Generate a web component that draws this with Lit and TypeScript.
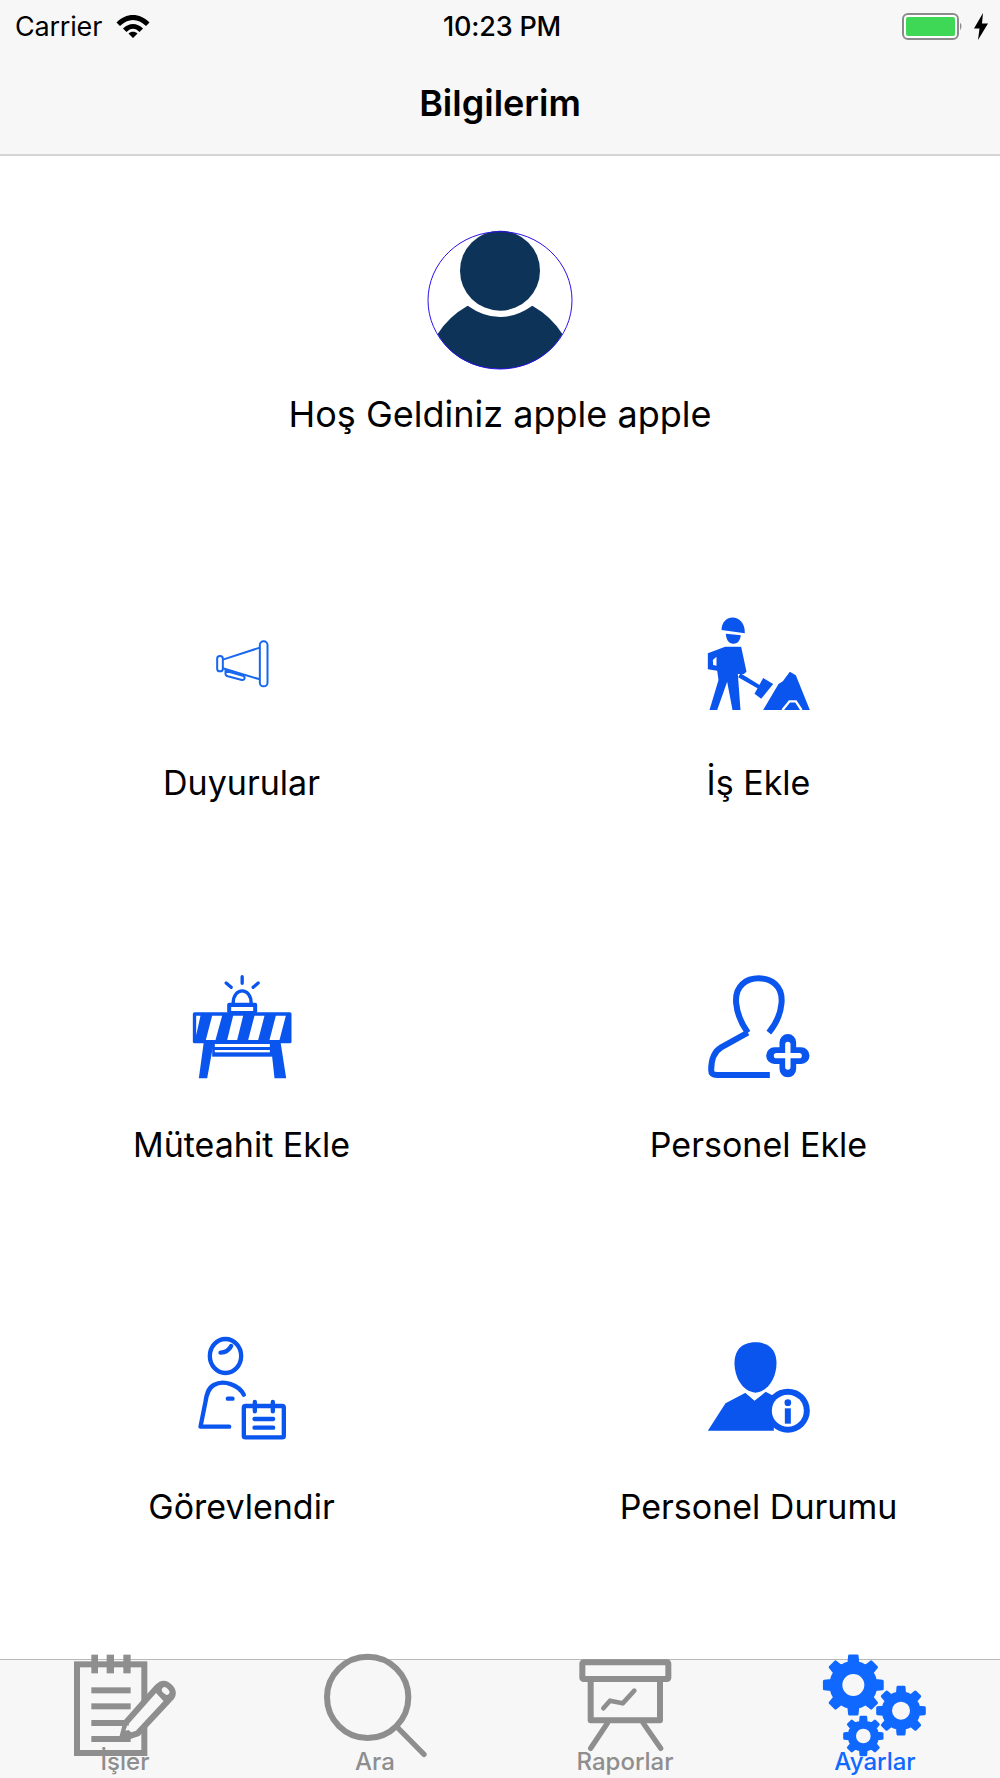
import { LitElement, html, css, svg } from "lit";
import { customElement } from "lit/decorators.js";

function gear(cx: number, cy: number, R: number, r: number, hole: number, teeth = 8) {
  const pts: string[] = [];
  const step = (Math.PI * 2) / teeth;
  for (let i = 0; i < teeth; i++) {
    const a = i * step - Math.PI / 2;
    const offs: [number, number][] = [
      [-0.5, r], [-0.26, r], [-0.17, R], [0.17, R], [0.26, r],
    ];
    for (const [o, rad] of offs) {
      const t = a + o * step;
      pts.push(`${(cx + rad * Math.cos(t)).toFixed(1)} ${(cy + rad * Math.sin(t)).toFixed(1)}`);
    }
  }
  return `M${pts.join("L")}Z M${cx - hole} ${cy}a${hole} ${hole} 0 1 0 ${hole * 2} 0a${hole} ${hole} 0 1 0 ${-hole * 2} 0Z`;
}

const megaphone = svg`<g fill="none" stroke="#1767f0" stroke-width="6" stroke-linejoin="round">
  <rect x="80" y="168" width="17" height="46" rx="8"/>
  <rect x="208" y="124" width="23" height="135" rx="11"/>
  <path d="M97 179L208 143M97 205L208 238"/>
  <path d="M105 212l52 15q7 3 5 9q-2 5-8 4l-42-11q-7-2-7-8z" />
</g>`;

const worker = svg`<g fill="#0a55ee">
  <path d="M93 90C93 38 165 38 163 100Z"/>
  <path d="M106 101L151 106C148 128 136 133 126 131C114 129 107 118 106 101Z"/>
  <path fill-rule="evenodd" d="M104 140H152L168 215L160 222L142 222L150 330H126L110 245L80 330H57L84 240L80 212L52 208V160ZM78 170L67 180L68 195L78 197Z"/>
  <path d="M150 220L212 258L206 268L143 232Z"/>
  <path d="M218 234L248 252L212 296L192 281Z"/>
  <path d="M218 330L264 252L277 244L298 215L316 226L358 330Z"/>
</g>
<path d="M276 330L297 304H316L333 330" fill="none" stroke="#fff" stroke-width="7"/>`;

const barrier = svg`<g fill="#0a55ee">
  <rect x="37" y="157" width="296" height="93" rx="5"/>
  <rect x="140" y="128" width="90" height="32" rx="6"/>
  <path d="M70 245H100L80 355H55ZM270 245H300L317 355H282Z"/>
  <rect x="95" y="248" width="180" height="42"/>
</g>
<g fill="#fff">
  <path d="M47 167H60L47 226ZM95 167H125L105 240H76ZM158 167H188L170 240H140ZM222 167H252L233 240H203ZM286 167H316L297 240H267Z"/>
  <rect x="103" y="252" width="165" height="9"/>
  <rect x="103" y="270" width="165" height="7"/>
  <rect x="152" y="141" width="66" height="12"/>
</g>
<g fill="none" stroke="#0a55ee" stroke-width="10" stroke-linecap="round">
  <path d="M158 130C158 80 212 80 212 130"/>
  <path d="M185 50V70M137 69L152 82M233 69L218 82"/>
</g>`;

const personAdd = svg`<g fill="none" stroke="#0a55ee" stroke-width="18">
  <path d="M172 218C152 190 140 165 137 130C132 75 170 55 205 55C240 55 278 75 273 130C270 165 258 190 235 218"/>
  <path d="M172 218L92 262C70 275 62 300 62 330C62 342 68 345 80 345H238" />
</g>
<path d="M252 280H332M292 240V320" transform="translate(0 7)" fill="none" stroke="#0a55ee" stroke-width="50" stroke-linecap="round"/>
<path d="M258 287H326M292 253V321" fill="none" stroke="#fff" stroke-width="16" stroke-linecap="round"/>`;

const assign = svg`<g fill="none" stroke="#0a55ee" stroke-width="13" stroke-linecap="round" stroke-linejoin="round">
  <ellipse cx="135" cy="108" rx="47" ry="51"/>
  <path d="M120 98C135 97 146 90 152 78"/>
  <path d="M190 224C175 195 130 178 100 195C82 205 78 225 75 245L60 320H146"/>
  <path d="M142 236H156"/>
  <rect x="190" y="258" width="120" height="94" rx="5"/>
  <path d="M223 246V274M277 246V274M222 297H278M222 323H278"/>
</g>`;

const personInfo = svg`<g fill="#0a55ee">
  <path d="M195 67C240 67 258 95 258 130C258 170 235 215 195 218C155 215 132 170 132 130C132 95 150 67 195 67Z"/>
  <path d="M52 332L105 250L165 218L192 240L225 215L250 228V332Z"/>
  <circle cx="292" cy="272" r="66"/>
</g>
<path d="M165 216L192 240L224 214" fill="none" stroke="#fff" stroke-width="4"/>
<circle cx="292" cy="272" r="48" fill="#fff"/>
<circle cx="292" cy="248" r="10" fill="#0a55ee"/>
<rect x="283" y="265" width="18" height="46" fill="#0a55ee"/>`;

const items = [
  { label: "Duyurular", icon: megaphone, vb: "-40.5 0 390 360" },
  { label: "İş Ekle", icon: worker, vb: "10.5 0 390 360" },
  { label: "Müteahit Ekle", icon: barrier, vb: "-10.5 6 390 360" },
  { label: "Personel Ekle", icon: personAdd, vb: "10.5 6 390 360" },
  { label: "Görevlendir", icon: assign, vb: "-10.5 12 390 360" },
  { label: "Personel Durumu", icon: personInfo, vb: "10.5 12 390 360" },
];

const G = "#8e8e8e";
const tabNotes = svg`<g fill="${G}">
  <rect x="124" y="44" width="20" height="56"/><rect x="170" y="44" width="22" height="56"/><rect x="220" y="44" width="22" height="56"/>
  <rect x="124" y="142" width="118" height="18"/><rect x="124" y="190" width="118" height="18"/>
  <rect x="124" y="240" width="100" height="18"/><rect x="124" y="288" width="118" height="18"/>
</g>
<rect x="81" y="73" width="202" height="266" fill="none" stroke="${G}" stroke-width="18"/>
<path d="M216 296L229 246L322 141Q341 122 360 141Q378 160 358 178L263 280Z" fill="#f7f7f7" stroke="${G}" stroke-width="18" stroke-linejoin="round"/>
<path d="M320 143Q341 122 360 141Q378 160 358 178L346 189L312 152Z" fill="${G}"/>
<ellipse cx="347" cy="153" rx="9" ry="13" transform="rotate(-45 347 153)" fill="#f7f7f7"/>
<path d="M205 305L222 258L252 284Z" fill="${G}"/><path d="M226 272L232 256L246 268Z" fill="#f7f7f7"/>`;

const tabSearch = svg`<g transform="translate(0 0)" fill="none" stroke="${G}">
  <circle cx="203" cy="172" r="122" stroke-width="18"/>
  <path d="M295 265L372 343" stroke-width="16" stroke-linecap="round"/>
</g>`;

const tabBoard = svg`<g fill="none" stroke="${G}" stroke-linecap="round" stroke-linejoin="round">
  <rect x="97" y="67" width="258" height="50" rx="4" stroke-width="18"/>
  <path d="M122 122V241H330V122" stroke-width="18"/>
  <path d="M160 205L180 182L218 190L253 152" stroke-width="14"/>
  <path d="M172 250L122 325M280 250L332 325" stroke-width="16"/>
</g>`;

const B = "#0f68ff";
const tabGears = svg`<g fill="${B}" stroke="${B}" stroke-width="8" stroke-linejoin="round" fill-rule="evenodd">
  <path d="${gear(160, 135, 88, 68, 37)}"/>
  <path d="${gear(303, 212, 71, 54, 31)}"/>
  <path d="${gear(190, 288, 57, 43, 26)}"/>
</g>`;

const tabs = [
  { label: "İşler", icon: tabNotes, active: false },
  { label: "Ara", icon: tabSearch, active: false },
  { label: "Raporlar", icon: tabBoard, active: false },
  { label: "Ayarlar", icon: tabGears, active: true },
];

@customElement("app-root")
export class AppRoot extends LitElement {
  static styles = css`
    :host {
      display: flex;
      flex-direction: column;
      width: 1000px;
      height: 1778px;
      background: #fff;
      font-family: Inter, "Liberation Sans", sans-serif;
      color: #000;
      overflow: hidden;
    }
    header {
      background: #f7f7f7;
      border-bottom: 2px solid #d5d5d5;
      height: 156px;
      box-sizing: border-box;
      flex: none;
    }
    .status {
      height: 52px;
      display: grid;
      grid-template-columns: 1fr auto 1fr;
      align-items: center;
      padding: 0 11px 0 15px;
      font-size: 27px;
      letter-spacing: -0.2px;
    }
    .left { display: flex; align-items: center; gap: 14px; }
    .time { font-weight: 500; }
    .right { display: flex; align-items: center; justify-content: flex-end; gap: 10px; }
    .nav {
      height: 102px;
      display: flex;
      align-items: center;
      justify-content: center;
      font-size: 36px;
      font-weight: 600;
    }
    main {
      flex: 1;
      display: flex;
      flex-direction: column;
      min-height: 0;
    }
    .profile {
      padding-top: 54px;
      display: flex;
      flex-direction: column;
      align-items: center;
      height: 444px;
      box-sizing: border-box;
      flex: none;
    }
    .profile svg { display: block; }
    .welcome {
      font-size: 36px;
      line-height: 44px;
      margin-top: 2px;
    }
    .grid {
      display: grid;
      grid-template-columns: repeat(2, 483px);
      column-gap: 34px;
      grid-auto-rows: 362px;
    }
    .cell {
      display: flex;
      flex-direction: column;
      align-items: center;
    }
    .cell svg { display: block; }
    .cell span {
      margin-top: 41px;
      font-size: 34px;
      line-height: 44px;
    }
    nav.tabs {
      flex: none;
      height: 119px;
      box-sizing: border-box;
      border-top: 1px solid #b9b9b9;
      background: #f7f7f7;
      display: grid;
      grid-template-columns: repeat(4, 250px);
    }
    .tab {
      display: grid;
      justify-items: center;
      color: #8e8e8e;
      font-size: 24px;
      font-weight: 500;
      min-height: 0;
    }
    .tab.active { color: #0f68ff; }
    .tab svg, .tab span { grid-area: 1 / 1; }
    .tab svg {
      display: block;
      align-self: start;
      margin-top: -20px;
    }
    .tab span {
      align-self: end;
      line-height: 30px;
      margin-bottom: 1px;
    }
  `;

  render() {
    return html`
      <header>
        <div class="status">
          <div class="left">
            <span>Carrier</span>
            <svg width="34" height="24" viewBox="0 0 34 24">
              <path d="M0.5 8.5C10 -1.5 24 -1.5 33.5 8.5L30 12C22 4 12 4 4 12Z M7 14.5C13 8.5 21 8.5 27 14.5L23.5 18C19.5 13.5 14.5 13.5 10.5 18Z M12.5 19.5C15 17 19 17 21.5 19.5L17 24Z" fill="#000"/>
            </svg>
          </div>
          <div class="time">10:23 PM</div>
          <div class="right">
            <svg width="62" height="27" viewBox="0 0 62 27">
              <rect x="1" y="1" width="55" height="25" rx="5" fill="#fff" stroke="#8b8b8b" stroke-width="2"/>
              <rect x="4" y="4" width="49" height="19" rx="2" fill="#3fd856"/>
              <path d="M58 9.5q3 3 0 8z" fill="#8b8b8b"/>
            </svg>
            <svg width="14" height="27" viewBox="0 0 14 27" style="margin-right:1px">
              <path d="M9 0L0 15.5H5.5L4 27L14 10.5H8Z" fill="#000"/>
            </svg>
          </div>
        </div>
        <div class="nav">Bilgilerim</div>
      </header>
      <main>
        <section class="profile">
          <svg width="200" height="180" viewBox="0 0 600 540">
            <circle cx="300" cy="182" r="120" fill="#0d3359"/>
            <path d="M203 287Q300 355 397 287Q455 320 487 372C450 440 380 477 300 477C220 477 150 440 113 372Q145 320 203 287Z" fill="#0d3359"/>
            <ellipse cx="300" cy="271" rx="216" ry="206" fill="none" stroke="#2a10ee" stroke-width="3"/>
          </svg>
          <div class="welcome">Hoş Geldiniz apple apple</div>
        </section>
        <section class="grid">
          ${items.map(
            (i) => html`<div class="cell">
              <svg width="130" height="120" viewBox="${i.vb}">${i.icon}</svg>
              <span>${i.label}</span>
            </div>`
          )}
        </section>
      </main>
      <nav class="tabs">
        ${tabs.map(
          (t) => html`<div class="tab ${t.active ? "active" : ""}">
            <svg width="250" height="138" viewBox="-150 0 750 414">${t.icon}</svg>
            <span>${t.label}</span>
          </div>`
        )}
      </nav>
    `;
  }
}
